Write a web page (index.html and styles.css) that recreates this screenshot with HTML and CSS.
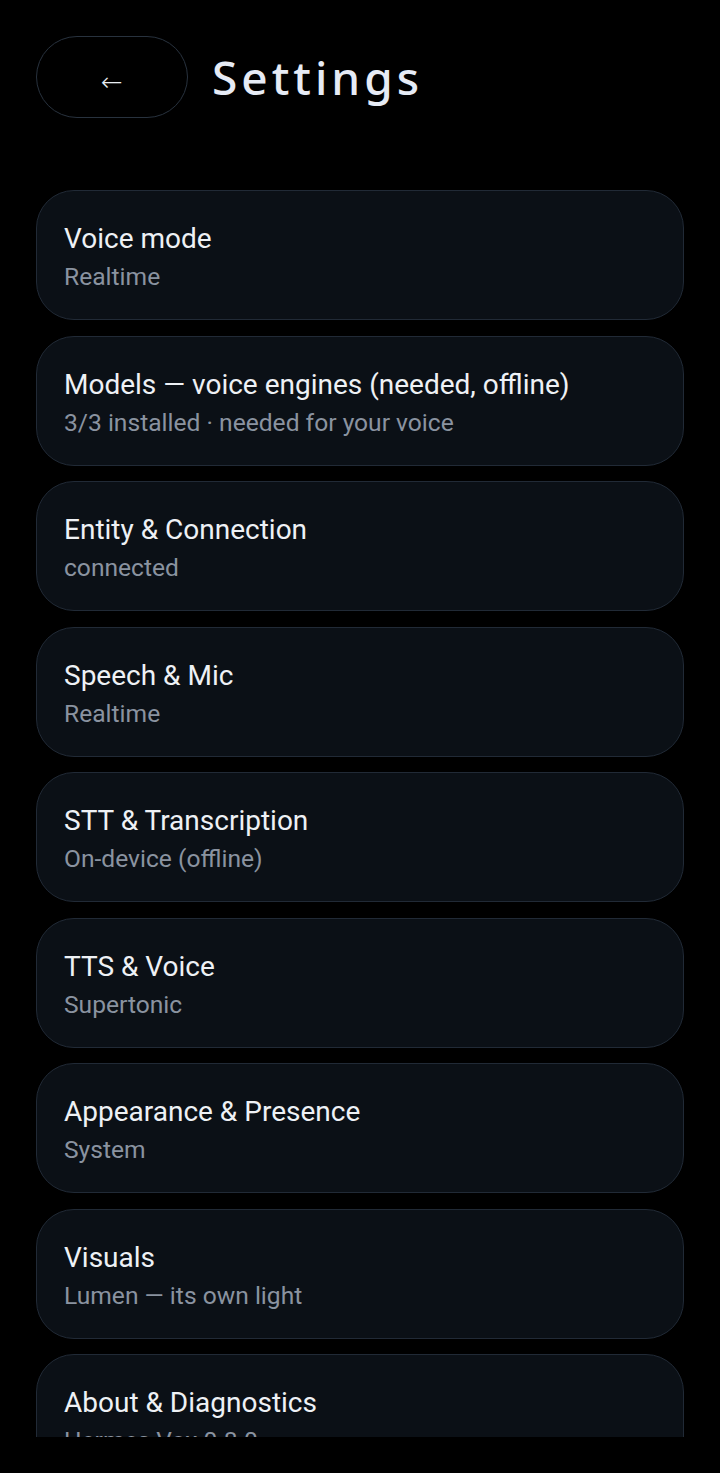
FILE: index.html
```html
<!DOCTYPE html>
<html lang="en">

<head>
    <meta charset="UTF-8">
    <title>Settings</title>
    <link rel="stylesheet" href="styles.css">
</head>

<body>

    <header class="topbar">
        <button class="tilbage">←</button>
        <h1>Settings</h1>
    </header>

    <section class="liste">
        <article class="punkt">
            <h2>Voice mode</h2>
            <p>Realtime</p>
        </article>
        <article class="punkt">
            <h2>Models — voice engines (needed, offline)</h2>
            <p>3/3 installed · needed for your voice</p>
        </article>
        <article class="punkt">
            <h2>Entity &amp; Connection</h2>
            <p>connected</p>
        </article>
        <article class="punkt">
            <h2>Speech &amp; Mic</h2>
            <p>Realtime</p>
        </article>
        <article class="punkt">
            <h2>STT &amp; Transcription</h2>
            <p>On-device (offline)</p>
        </article>
        <article class="punkt">
            <h2>TTS &amp; Voice</h2>
            <p>Supertonic</p>
        </article>
        <article class="punkt">
            <h2>Appearance &amp; Presence</h2>
            <p>System</p>
        </article>
        <article class="punkt">
            <h2>Visuals</h2>
            <p>Lumen — its own light</p>
        </article>
        <article class="punkt">
            <h2>About &amp; Diagnostics</h2>
            <p>Hermes Vox 0.8.0</p>
        </article>
    </section>

</body></html>
```

FILE: styles.css
```css
html,
body {
    margin: 0;
    background-color: #000;
}

body {
    padding: 36px 36px 0 36px;
    height: 1473px;
    box-sizing: border-box;
    font-family: Roboto, "Liberation Sans", sans-serif;
    overflow: hidden;
}

.topbar {
    display: flex;
    align-items: center;
    gap: 24px;
    height: 82px;
}

.tilbage {
    width: 152px;
    height: 82px;
    border-radius: 41px;
    border: 1.5px solid #28323e;
    background-color: #000;
    color: #e9edf3;
    font-size: 26px;
    font-family: "DejaVu Sans", sans-serif;
    font-weight: 300;
    padding: 0;
    padding-top: 10px;
    cursor: pointer;
}

h1 {
    margin: 0;
    font-family: "Noto Sans", sans-serif;
    font-weight: 500;
    font-size: 46px;
    letter-spacing: 4px;
    color: #e6ebf5;
}

.liste {
    margin-top: 72px;
    height: 1247px;
    overflow: hidden;
    display: flex;
    flex-direction: column;
    gap: 15.5px;
}

.punkt {
    flex-shrink: 0;
    box-sizing: border-box;
    height: 130px;
    background-color: #0b1016;
    border: 1.5px solid #212a36;
    border-radius: 38px;
    padding: 31px 28px 0 27px;
}

.punkt h2 {
    margin: 0;
    font-weight: 400;
    font-size: 28px;
    line-height: 34px;
    color: #eef1f5;
}

.punkt p {
    margin: 6px 0 0 0;
    font-size: 24.6px;
    line-height: 30px;
    color: #8a93a0;
}
```
